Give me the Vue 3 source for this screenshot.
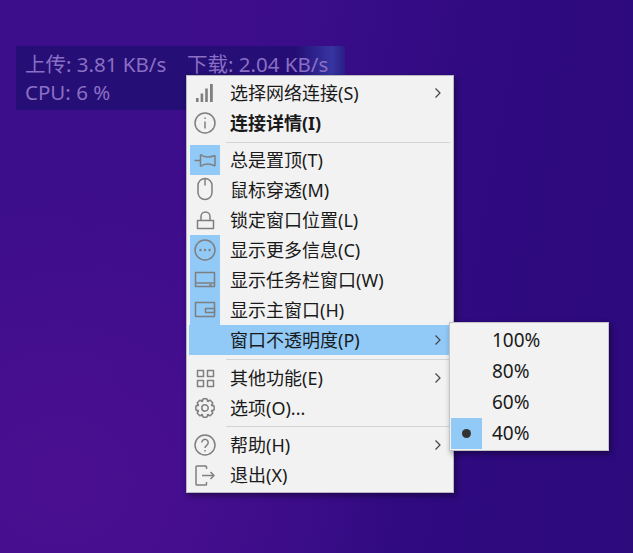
<script setup>
function gearPath() {
  const cx = 15, cy = 15, n = 8
  const pts = []
  for (let i = 0; i < n; i++) {
    const a = (i * 2 * Math.PI) / n - Math.PI / 2
    const w = 0.27, g = 0.2
    const at = (r, t) => `${(cx + r * Math.cos(t)).toFixed(2)} ${(cy + r * Math.sin(t)).toFixed(2)}`
    pts.push(at(7.3, a - w - g), at(9.3, a - w + 0.08), at(9.3, a + w - 0.08), at(7.3, a + w + g))
  }
  return 'M' + pts.join('L') + 'z'
}
const icons = {
  signal: { fill: [[6, 20, 2.6, 4], [10.6, 15.5, 2.6, 8.5], [15.2, 10.5, 2.6, 13.5], [20, 6, 2.8, 18]] },
  info: { d: ['M15 5a10 10 0 1 0 0 20a10 10 0 1 0 0-20z', 'M15 13.5v7', 'M15 9.6v1.4'] },
  pin: { d: ['M4.500 15.500h6', 'M10.500 9.500v12', 'M25 10.500v10.500', 'M10.500 9.500q3 2.500 7 2.500t7.500-1.500', 'M10.500 21.500q3-2.500 7-2.500t7.500 2'] },
  mouse: { d: ['M8 10.500a7 7 0 0 1 14 0v7a7 7 0 0 1-7 7a7 7 0 0 1-7-7z', 'M15 3.500v7'] },
  lock: { d: ['M7.500 15.500h16v8h-16z', 'M11 15v-3.500a4.500 4.500 0 0 1 9 0v3.500'] },
  more: { d: ['M15 5a10 10 0 1 0 0 20a10 10 0 1 0 0-20z'], dots: [10.5, 15, 19.5] },
  taskbar: { d: ['M5.500 7.500h19v14h-19z', 'M5.500 18h19', 'M19 20h3'] },
  mainwin: { d: ['M5.500 7.500h19v14h-19z', 'M15.500 13.500h9v4h-9z'] },
  blank: {},
  grid: { d: ['M7.500 7.500h6v6h-6z', 'M17.500 7.500h6v6h-6z', 'M7.500 17.500h6v6h-6z', 'M17.500 17.500h6v6h-6z'] },
  gear: { d: [gearPath(), 'M15 11.800a3.200 3.200 0 1 0 0 6.400a3.200 3.200 0 1 0 0-6.400z'] },
  help: { d: ['M15 5a10 10 0 1 0 0 20a10 10 0 1 0 0-20z', 'M11.800 12.500a3.200 3.200 0 1 1 5.200 2.500c-1.300 1-2 1.500-2 3', 'M15 20v1.500'] },
  exit: { d: ['M16.500 9v-2.200a.8.8 0 0 0-.8-.8h-8.900a.8.8 0 0 0-.8.8v17.400a.8.8 0 0 0 .8.8h8.900a.8.8 0 0 0 .8-.8v-2.200', 'M12 15.500h12', 'M20.500 12l3.500 3.500l-3.500 3.500'] },
}
const groups = [
  [
    { icon: 'signal', label: '选择网络连接(S)', arrow: true },
    { icon: 'info', label: '连接详情(I)', bold: true },
  ],
  [
    { icon: 'pin', label: '总是置顶(T)', on: true },
    { icon: 'mouse', label: '鼠标穿透(M)' },
    { icon: 'lock', label: '锁定窗口位置(L)' },
    { icon: 'more', label: '显示更多信息(C)', on: true },
    { icon: 'taskbar', label: '显示任务栏窗口(W)', on: true },
    { icon: 'mainwin', label: '显示主窗口(H)', on: true },
    { icon: 'blank', label: '窗口不透明度(P)', arrow: true, hot: true },
  ],
  [
    { icon: 'grid', label: '其他功能(E)', arrow: true },
    { icon: 'gear', label: '选项(O)...' },
  ],
  [
    { icon: 'help', label: '帮助(H)', arrow: true },
    { icon: 'exit', label: '退出(X)' },
  ],
]
const levels = [
  { label: '100%' },
  { label: '80%' },
  { label: '60%' },
  { label: '40%', on: true },
]
</script>

<template>
  <div class="desktop">
    <div class="widget">
      <div class="line">
        <span class="up">上传: 3.81 KB/s</span>
        <span>下载: 2.04 KB/s</span>
      </div>
      <div class="line">CPU: 6 %</div>
    </div>

    <div class="menu">
      <template v-for="(group, gi) in groups" :key="gi">
        <div v-if="gi" class="sep" :class="{ first: gi === 1, wide: gi === 2 }"></div>
        <div v-for="item in group" :key="item.label" class="row" :class="{ hot: item.hot }">
          <span class="iconbox" :class="{ on: item.on }">
            <svg v-if="item.icon !== 'blank'" class="ic" width="30" height="30" viewBox="0 0 30 30">
              <rect v-for="(r, i) in icons[item.icon].fill || []" :key="i" :x="r[0]" :y="r[1]" :width="r[2]" :height="r[3]" class="bar" />
              <path v-for="(d, i) in icons[item.icon].d || []" :key="i" :d="d" />
              <circle v-for="x in icons[item.icon].dots || []" :key="x" :cx="x" cy="15" r="1.200" class="bar" />
            </svg>
          </span>
          <span class="label" :class="{ bold: item.bold }">{{ item.label }}</span>
          <svg v-if="item.arrow" class="arrow" width="8" height="12" viewBox="0 0 8 12">
            <path d="M1.500 1.500l4.500 4.500l-4.500 4.500" />
          </svg>
        </div>
      </template>
    </div>

    <div class="submenu">
      <div v-for="level in levels" :key="level.label" class="subrow">
        <span class="subicon" :class="{ on: level.on }">
          <span v-if="level.on" class="dot"></span>
        </span>
        <span class="sublabel">{{ level.label }}</span>
      </div>
    </div>
  </div>
</template>

<style>
html, body { margin: 0; padding: 0; }
</style>

<style scoped>
.desktop {
  position: relative;
  width: 633px;
  height: 553px;
  overflow: hidden;
  background:
    radial-gradient(ellipse 340px 300px at 60px 480px, #4a0f90 0%, rgba(74, 15, 144, 0) 100%),
    linear-gradient(100deg, #3c0e8c 0%, #3d0d8c 35%, #2f0a80 70%, #2c0a7c 100%);
  font-family: "Noto Sans", "Noto Sans CJK SC", sans-serif;
}
.widget {
  position: absolute;
  left: 16px;
  top: 46px;
  width: 329px;
  height: 64px;
  box-sizing: border-box;
  padding: 4px 0 0 9px;
  background:
    linear-gradient(90deg, rgba(70, 85, 200, 0) 85%, rgba(70, 85, 200, 0.55) 96%, rgba(70, 85, 200, 0.2) 100%),
    rgba(30, 15, 110, 0.75);
  color: #8a6fc4;
  font-size: 20.500px;
  line-height: 28px;
}
.line { display: flex; white-space: nowrap; }
.up { width: 162px; }
.menu {
  position: absolute;
  left: 186px;
  top: 75px;
  width: 268px;
  box-sizing: border-box;
  padding: 2px 0 2px 2px;
  background: #f2f2f2;
  border: 1px solid #b9b6c4;
  box-shadow: 2px 3px 6px rgba(0, 0, 0, 0.4);
  color: #1a1a1a;
}
.row {
  display: flex;
  align-items: center;
  height: 30px;
  margin-right: 4px;
  font-size: 18px;
  position: relative;
}
.row.hot { background: #91c9f7; }
.iconbox {
  width: 30px;
  height: 30px;
  flex: none;
  margin-left: 1px;
}
.iconbox.on { background: #91c9f7; }
.ic { display: block; fill: none; stroke: #7f7f7f; stroke-width: 1.500; stroke-linejoin: round; }
.ic .bar { fill: #7f7f7f; stroke: none; }
.label { margin: -3px 0 0 10px; white-space: nowrap; }
.label.bold { font-weight: 700; }
.arrow {
  position: absolute;
  right: 7px;
  top: 9px;
  fill: none;
  stroke: #444;
  stroke-width: 1.200;
}
.sep {
  height: 1px;
  margin: 3px 3px 3px 37px;
  background: #d4d4d4;
}
.sep.first { margin-top: 4px; margin-bottom: 2px; }
.sep.wide { margin-top: 4px; margin-bottom: 3px; }
.submenu {
  position: absolute;
  left: 449px;
  top: 322px;
  width: 160px;
  box-sizing: border-box;
  padding: 2px 1px 1px 1px;
  background: #f2f2f2;
  border: 1px solid #c4c4c4;
  box-shadow: 2px 3px 6px rgba(0, 0, 0, 0.4);
  color: #1a1a1a;
}
.subrow {
  display: flex;
  align-items: center;
  height: 31px;
  font-size: 19px;
}
.subicon {
  width: 31px;
  height: 31px;
  flex: none;
  display: flex;
  align-items: center;
  justify-content: center;
}
.subicon.on { background: #91c9f7; }
.dot {
  width: 9px;
  height: 9px;
  border-radius: 50%;
  background: #333;
}
.sublabel { margin: -1px 0 0 10px; }
</style>
